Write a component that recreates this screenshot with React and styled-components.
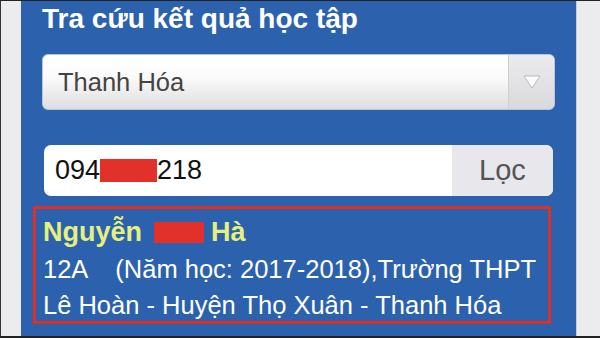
import React from "react";
import styled, { createGlobalStyle } from "styled-components";

const GlobalStyle = createGlobalStyle`
  body {
    margin: 0;
    font-family: "Liberation Sans", Arial, sans-serif;
  }
`;

const Frame = styled.div`
  width: 600px;
  height: 338px;
  box-sizing: border-box;
  border-top: 1px solid #222;
  border-bottom: 2px solid #222;
  border-left: 1px solid #333;
  display: flex;
  overflow: hidden;
  background: #ececef;
`;

const Gutter = styled.div`
  width: ${(p) => p.w}px;
  flex-shrink: 0;
  background: #ececef;
  border-left: ${(p) => (p.edge ? "1px solid #c9cdd6" : "none")};
`;

const Panel = styled.div`
  flex: 1;
  background: #2c62ad;
  display: flex;
  flex-direction: column;
  padding-top: 2px;
`;

const Title = styled.h1`
  margin: 0 0 0 21px;
  color: #fff;
  font-size: 28px;
  font-weight: bold;
  line-height: 32px;
`;

const Select = styled.div`
  margin: 19px 21px 0 21px;
  height: 56px;
  box-sizing: border-box;
  border-radius: 6px;
  border: 1px solid #b9c6d8;
  background: linear-gradient(#ffffff, #fbfbfb 40%, #dedee0);
  display: flex;
  align-items: center;
  overflow: hidden;
`;

const SelectText = styled.span`
  flex: 1;
  padding-left: 15px;
  color: #444;
  font-size: 25.5px;
`;

const Arrow = styled.div`
  width: 45px;
  height: 100%;
  border-left: 1px solid #cfcfd2;
  background: linear-gradient(#ececee, #d9d9dc);
  display: flex;
  align-items: center;
  justify-content: center;
`;

const Search = styled.div`
  margin: 35px 23px 0 23px;
  height: 51px;
  border-radius: 7px;
  background: #fff;
  display: flex;
  overflow: hidden;
`;

const Phone = styled.div`
  flex: 1;
  display: flex;
  align-items: center;
  padding-left: 11px;
  font-size: 27px;
  color: #111;
`;

const Redact = styled.span`
  display: inline-block;
  width: ${(p) => p.w}px;
  height: ${(p) => p.h}px;
  margin: 0 ${(p) => p.mr || 0}px 0 ${(p) => p.ml || 0}px;
  background: #e2302b;
  vertical-align: ${(p) => p.v}px;
`;

const FilterButton = styled.div`
  width: 101px;
  background: #e8e8ec;
  color: #555;
  font-size: 29px;
  display: flex;
  align-items: center;
  justify-content: center;
`;

const Result = styled.div`
  margin: 10px 25px 0 12px;
  height: 118px;
  box-sizing: border-box;
  border: 3px solid #dc3029;
  padding: 5px 0 0 7px;
  display: flex;
  flex-direction: column;
`;

const Name = styled.div`
  color: #e6f07c;
  font-weight: bold;
  font-size: 27px;
  line-height: 37px;
  white-space: pre;
`;

const Line = styled.div`
  color: #fff;
  font-size: 25.5px;
  line-height: 36px;
  white-space: pre;
`;

export default function App() {
  return (
    <>
      <GlobalStyle />
      <Frame>
        <Gutter w={20} />
        <Panel>
          <Title>Tra cứu kết quả học tập</Title>
          <Select>
            <SelectText>Thanh Hóa</SelectText>
            <Arrow>
              <svg width="18" height="14" viewBox="0 0 18 14">
                <path d="M1 1 L17 1 L9 13 Z" fill="#fafafa" stroke="#b9b9bd" strokeWidth="1" />
              </svg>
            </Arrow>
          </Select>
          <Search>
            <Phone>
              094<Redact w={57} h={23} v={-3} />218
            </Phone>
            <FilterButton>Lọc</FilterButton>
          </Search>
          <Result>
            <Name>
              Nguyễn<Redact w={50} h={21} v={-2} ml={12} mr={7} />Hà
            </Name>
            <Line>12A    (Năm học: 2017-2018),Trường THPT</Line>
            <Line>Lê Hoàn - Huyện Thọ Xuân - Thanh Hóa</Line>
          </Result>
        </Panel>
        <Gutter w={23} edge />
      </Frame>
    </>
  );
}
